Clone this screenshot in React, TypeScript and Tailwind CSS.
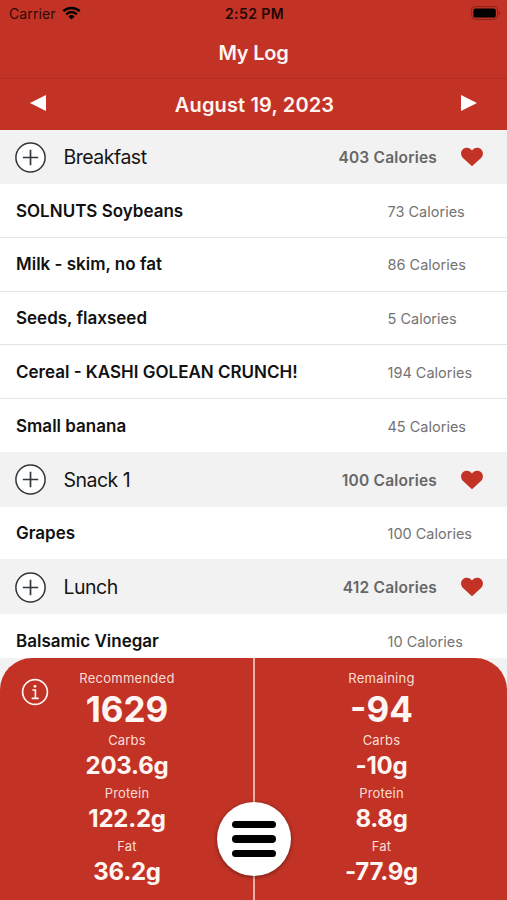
import React from "react";

type Food = {
	name: string;
	calories: number;
};

type Meal = {
	title: string;
	calories: number;
	foods: Food[];
};

type Totals = {
	label: string;
	calories: string;
	carbs: string;
	protein: string;
	fat: string;
};

const meals: Meal[] = [
	{
		title: "Breakfast",
		calories: 403,
		foods: [
			{ name: "SOLNUTS Soybeans", calories: 73 },
			{ name: "Milk - skim, no fat", calories: 86 },
			{ name: "Seeds, flaxseed", calories: 5 },
			{ name: "Cereal - KASHI GOLEAN CRUNCH!", calories: 194 },
			{ name: "Small banana", calories: 45 },
		],
	},
	{
		title: "Snack 1",
		calories: 100,
		foods: [{ name: "Grapes", calories: 100 }],
	},
	{
		title: "Lunch",
		calories: 412,
		foods: [{ name: "Balsamic Vinegar", calories: 10 }],
	},
];

const recommended: Totals = {
	label: "Recommended",
	calories: "1629",
	carbs: "203.6g",
	protein: "122.2g",
	fat: "36.2g",
};

const remaining: Totals = {
	label: "Remaining",
	calories: "-94",
	carbs: "-10g",
	protein: "8.8g",
	fat: "-77.9g",
};

const StatusBar: React.FC = () => (
	<div className="grid h-[27px] grid-cols-3 items-center pl-[9px] pr-[6px] text-black">
		<div className="flex items-center gap-[6px]">
			<span className="text-[14px] tracking-[0.1px] text-[#2b0b08]">Carrier</span>
			<svg className="mb-[2px] h-[14px] w-[19px]" viewBox="0 0 19 14" fill="none" stroke="currentColor">
				<path d="M1.3 5.2a12 12 0 0 1 16.4 0" strokeWidth="2.5" />
				<path d="M4.2 8.3a7.8 7.8 0 0 1 10.6 0" strokeWidth="2.3" />
				<path d="M9.5 13.6 6.4 10.4a4.6 4.6 0 0 1 6.2 0Z" fill="currentColor" stroke="none" />
			</svg>
		</div>
		<span className="pr-[1px] text-center text-[14px] font-semibold tracking-[0.4px] text-[#1c0705]">2:52 PM</span>
		<svg className="mb-[1px] h-[14px] w-[30px] justify-self-end" viewBox="0 0 30 14">
			<rect x="0.6" y="0.6" width="26" height="12.8" rx="4" fill="none" stroke="#000" strokeOpacity="0.3" />
			<rect x="2.4" y="2.4" width="22.4" height="9.2" rx="2.2" fill="#000" />
			<path d="M28 4.7c1.6.8 1.6 3.8 0 4.6Z" fill="#000" fillOpacity="0.35" />
		</svg>
	</div>
);

const Header: React.FC = () => (
	<header className="bg-[#c23326] text-[#fff5f2]">
		<StatusBar />
		<h1 className="flex h-[52px] items-center justify-center border-b border-[#b32d22] text-[20px] font-semibold tracking-[-0.2px]">
			My Log
		</h1>
		<div className="flex h-[51.4px] items-center justify-between px-[30px]">
			<button>
				<svg className="mb-[4px] h-4 w-4 fill-white" viewBox="0 0 16 16">
					<path d="M16 0v16L0 8Z" />
				</svg>
			</button>
			<span className="pl-[2px] pt-px text-[20px] font-semibold tracking-[0.15px]">August 19, 2023</span>
			<button>
				<svg className="mb-[4px] h-4 w-4 fill-white" viewBox="0 0 16 16">
					<path d="M0 0v16l16-8Z" />
				</svg>
			</button>
		</div>
	</header>
);

const MealHeader: React.FC<{ meal: Meal }> = ({ meal }) => (
	<div className="flex h-[53.75px] items-center bg-[#f2f2f2] pl-[15px] pr-[24px]">
		<svg className="h-[31px] w-[31px]" viewBox="0 0 31 31" fill="#fff" stroke="#30363a">
			<circle cx="15.5" cy="15.5" r="14.6" strokeWidth="1.5" />
			<path d="M15.5 7.8v15.4M7.8 15.5h15.4" strokeWidth="1.7" />
		</svg>
		<span className="ml-[17.5px] pt-[1px] text-[19.5px] tracking-[-0.5px] text-[#151515]">{meal.title}</span>
		<span className="ml-auto pt-[1px] text-[15.5px] font-semibold tracking-[0.2px] text-[#666]">
			{meal.calories} Calories
		</span>
		<svg className="ml-[24px] h-[20px] w-[22px] fill-[#c23326]" viewBox="0 0 22 20">
			<path d="M11 19.3 2 10.9C-2.1 6.7.9.7 5.7.7c2.5 0 4.1 1.2 5.3 2.8C12.2 1.9 13.8.7 16.3.7c4.8 0 7.8 6 3.7 10.2Z" />
		</svg>
	</div>
);

const FoodRow: React.FC<{ food: Food }> = ({ food }) => (
	<div className="flex h-[53.75px] items-center border-b border-[#e4e4e4] bg-white pl-[16px] last:border-[#f2f2f2]">
		<span className="w-[371.5px] pt-[1.5px] text-[17px] font-semibold text-[#111]">{food.name}</span>
		<span className="pt-[2px] text-[14.5px] text-[#737373]">{food.calories} Calories</span>
	</div>
);

const TotalsColumn: React.FC<{ totals: Totals }> = ({ totals }) => {
	const macros = [
		{ label: "Carbs", value: totals.carbs },
		{ label: "Protein", value: totals.protein },
		{ label: "Fat", value: totals.fat },
	];

	return (
		<div className="flex flex-1 flex-col items-center pl-[1.5px] pt-[12px]">
			<span className="text-[13px] leading-[17px] tracking-[0.25px] text-[#fbdcd6]">{totals.label}</span>
			<span className="text-[35px] font-bold leading-[44px]">{totals.calories}</span>
			{macros.map((macro) => (
				<div key={macro.label} className="flex h-[52.75px] flex-col items-center">
					<span className="text-[13px] leading-[19px] tracking-[0.2px] text-[#fbdcd6]">{macro.label}</span>
					<span className="text-[24px] font-bold leading-[31px] tracking-[-0.25px]">{macro.value}</span>
				</div>
			))}
		</div>
	);
};

const App: React.FC = () => {
	return (
		<div className="flex h-[900px] w-[507px] flex-col overflow-hidden bg-[#f2f2f2] font-['Inter',sans-serif]">
			<Header />
			<main className="min-h-0 flex-1 overflow-hidden">
				{meals.map((meal) => (
					<section key={meal.title}>
						<MealHeader meal={meal} />
						{meal.foods.map((food) => (
							<FoodRow key={food.name} food={food} />
						))}
					</section>
				))}
			</main>
			{/* the list is cut off behind the rounded corners of the summary */}
			<footer className="relative flex h-[242px] shrink-0 rounded-t-[32px] bg-[#c23326] text-[#fff5f2]">
				<TotalsColumn totals={recommended} />
				<div className="w-[2px] bg-[#eeb0a6]" />
				<TotalsColumn totals={remaining} />
				<svg
					className="absolute left-[21px] top-[20px] h-[28px] w-[28px]"
					viewBox="0 0 28 28"
					fill="none"
					stroke="#fff5f2"
				>
					<circle cx="14" cy="14" r="12.4" strokeWidth="1.7" />
					<path d="M11.3 12h3.1v8M10.7 20.4h7" strokeWidth="1.6" />
					<circle cx="14" cy="8.3" r="1.4" fill="#fff5f2" stroke="none" />
				</svg>
				<button className="absolute left-[217px] top-[144px] flex h-[74px] w-[74px] flex-col items-center justify-center gap-[7px] rounded-full bg-white shadow-[0_1px_4px_rgba(0,0,0,0.45)]">
					<span className="h-[7.5px] w-[44px] rounded-full bg-black" />
					<span className="h-[7.5px] w-[44px] rounded-full bg-black" />
					<span className="h-[7.5px] w-[44px] rounded-full bg-black" />
				</button>
			</footer>
		</div>
	);
};

export default App;
